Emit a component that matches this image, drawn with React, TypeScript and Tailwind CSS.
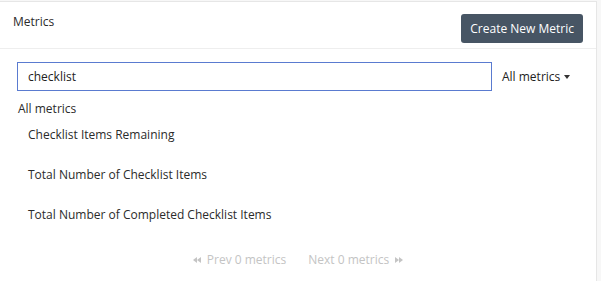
const metrics = [
  'Checklist Items Remaining',
  'Total Number of Checklist Items',
  'Total Number of Completed Checklist Items',
];

function DoubleTriangle({ dir }: { dir: 'left' | 'right' }) {
  return (
    <svg width="8" height="6" viewBox="0 0 8 6" fill="currentColor">
      {dir === 'left' ? (
        <>
          <polygon points="4,0 4,6 0,3" />
          <polygon points="8,0 8,6 4,3" />
        </>
      ) : (
        <>
          <polygon points="0,0 0,6 4,3" />
          <polygon points="4,0 4,6 8,3" />
        </>
      )}
    </svg>
  );
}

export default function App() {
  return (
    <div className="w-[601px] h-[281px] bg-[#f7f7f7] pt-[1px] font-['Open_Sans',sans-serif] text-[#2b2b2b]">
      <div className="w-[597px] h-[280px] bg-white border-t border-[#e6e6e6] border-r">
        <div className="flex justify-between items-start h-[47px] border-b border-[#eeeeee] pl-[13px] pr-[13px]">
          <span className="text-[12px] mt-[11px]">Metrics</span>
          <button className="mt-[12px] h-[29px] px-[9px] rounded-[3px] bg-[#475564] text-white text-[12px]">
            Create New Metric
          </button>
        </div>
        <div className="pl-[17px] pt-[13px]">
          <div className="flex items-center">
            <div className="w-[475px] h-[29px] border border-[#5a7bd0] flex items-center pl-[10px] text-[12px] text-[#222]">
              checklist
            </div>
            <div className="ml-[10px] flex items-center text-[12px] text-[#222]">
              All metrics
              <span className="ml-[4px] w-0 h-0 border-l-[3px] border-r-[3px] border-t-[4px] border-l-transparent border-r-transparent border-t-[#333]"></span>
            </div>
          </div>
          <div className="mt-[9px] text-[12px] ml-[1px] leading-[18px]">All metrics</div>
          <div className="ml-[11px] mt-[8px] flex flex-col gap-[22px] text-[12px] leading-[18px]">
            {metrics.map(m => (
              <div key={m}>{m}</div>
            ))}
          </div>
        </div>
        <div className="mt-[27px] flex justify-center gap-[22px] text-[12px] text-[#c4c4c4]">
          <span className="flex items-center gap-[6px]">
            <DoubleTriangle dir="left" />
            Prev 0 metrics
          </span>
          <span className="flex items-center gap-[6px]">
            Next 0 metrics
            <DoubleTriangle dir="right" />
          </span>
        </div>
      </div>
    </div>
  );
}
